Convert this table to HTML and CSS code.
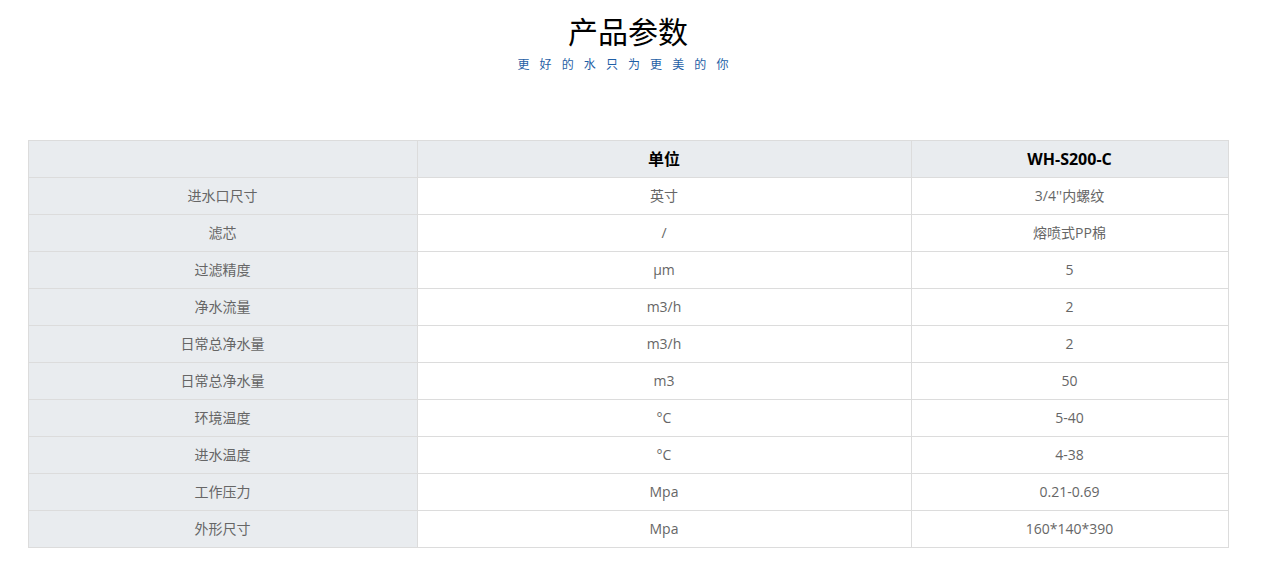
FILE: index.html
```html
<!DOCTYPE html>
<html lang="zh-CN">
<head>
<meta charset="utf-8">
<title>产品参数</title>
<link rel="stylesheet" href="styles.css">
</head>
<body>
<div class="page">
  <header class="heading">
    <h1 class="title">产品参数</h1>
    <p class="subtitle">更好的水只为更美的你</p>
  </header>
  <table class="spec">
    <colgroup>
      <col class="c1"><col class="c2"><col class="c3">
    </colgroup>
    <thead>
      <tr><th></th><th>单位</th><th>WH-S200-C</th></tr>
    </thead>
    <tbody>
      <tr><td class="name">进水口尺寸</td><td>英寸</td><td>3/4''内螺纹</td></tr>
      <tr><td class="name">滤芯</td><td>/</td><td>熔喷式PP棉</td></tr>
      <tr><td class="name">过滤精度</td><td>μm</td><td>5</td></tr>
      <tr><td class="name">净水流量</td><td>m3/h</td><td>2</td></tr>
      <tr><td class="name">日常总净水量</td><td>m3/h</td><td>2</td></tr>
      <tr><td class="name">日常总净水量</td><td>m3</td><td>50</td></tr>
      <tr><td class="name">环境温度</td><td>°C</td><td>5-40</td></tr>
      <tr><td class="name">进水温度</td><td>°C</td><td>4-38</td></tr>
      <tr><td class="name">工作压力</td><td>Mpa</td><td>0.21-0.69</td></tr>
      <tr><td class="name">外形尺寸</td><td>Mpa</td><td>160*140*390</td></tr>
    </tbody>
  </table>
</div>
</body>
</html>
```
FILE: styles.css
```css
html, body {
  margin: 0;
  padding: 0;
  background: #fff;
}
body {
  font-family: "Open Sans", "Noto Sans CJK SC", sans-serif;
  color: #666;
}
.page {
  width: 1256px;
  display: flex;
  flex-direction: column;
  align-items: center;
}
.heading {
  display: flex;
  flex-direction: column;
  align-items: center;
  padding-top: 10px;
}
.title {
  margin: 0;
  font-family: "Noto Sans CJK SC", sans-serif;
  font-weight: normal;
  font-size: 30px;
  line-height: 40px;
  color: #000;
}
.subtitle {
  margin: 6px 0 0 0;
  font-family: "Noto Sans CJK SC", sans-serif;
  font-size: 12px;
  line-height: 16px;
  letter-spacing: 10.1px;
  color: #1f5fa6;
}
.spec {
  margin-top: 68px;
  width: 1200px;
  border-collapse: collapse;
  table-layout: fixed;
  font-size: 14px;
}
.c1 { width: 389px; }
.c2 { width: 494px; }
.c3 { width: 317px; }
.spec th, .spec td {
  border: 1px solid #dcdcdc;
  height: 36px;
  padding: 0;
  text-align: center;
  vertical-align: middle;
  line-height: 20px;
}
.spec th {
  background: #e9ecef;
  color: #000;
  font-weight: bold;
  font-size: 16px;
}
.spec td.name {
  background: #e9ecef;
}
```
